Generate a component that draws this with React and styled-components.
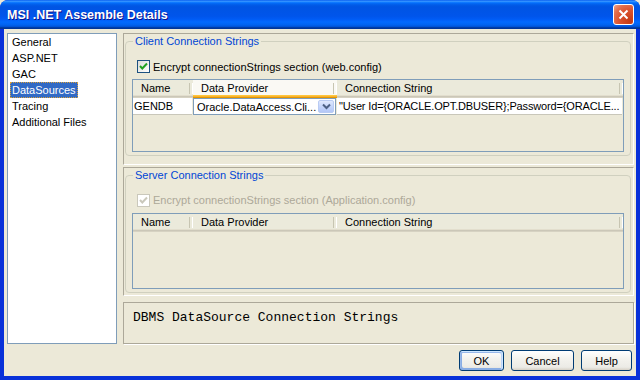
import React from 'react'
import styled, { createGlobalStyle } from 'styled-components'

const GlobalStyle = createGlobalStyle`
    html, body { margin:0; padding:0; background:#ECE9D8; }
    body { font-family:"Liberation Sans", Arial, sans-serif; font-size:11px; color:#000; }
    * { box-sizing:border-box; }
`

const pages = ['General', 'ASP.NET', 'GAC', 'DataSources', 'Tracing', 'Additional Files']

function Check({ disabled }) {
    return (
        <CheckBox $disabled={disabled}>
            <svg width="11" height="11" viewBox="0 0 11 11">
                <path d="M2 5 L4.3 7.5 L9 2.5" fill="none" stroke={disabled ? '#CAC8BB' : '#21A121'} strokeWidth="2" />
            </svg>
        </CheckBox>
    )
}

function Grid({ height, hot, rows }) {
    return (
        <GridBox style={{ height }}>
            <GridRow>
                <HeadCell>Name</HeadCell>
                <HeadCell $hot={hot}>Data Provider</HeadCell>
                <HeadCell>Connection String</HeadCell>
            </GridRow>
            {rows.map((r) => (
                <GridRow key={r.name}>
                    <Cell>{r.name}</Cell>
                    <Combo>
                        <span>{r.provider}</span>
                        <ComboButton>
                            <svg width="9" height="7" viewBox="0 0 9 7">
                                <path d="M1 1.5 L4.5 5 L8 1.5" fill="none" stroke="#4D6185" strokeWidth="2" />
                            </svg>
                        </ComboButton>
                    </Combo>
                    <Cell $last>{r.conn}</Cell>
                </GridRow>
            ))}
        </GridBox>
    )
}

function App() {
    return (
        <>
            <GlobalStyle />
            <Window>
                <TitleBar>
                    <Title>MSI .NET Assemble Details</Title>
                    <CloseBtn>
                        <svg width="11" height="11" viewBox="0 0 11 11">
                            <path d="M1.5 1.5 L9.5 9.5 M9.5 1.5 L1.5 9.5" stroke="#fff" strokeWidth="2" />
                        </svg>
                    </CloseBtn>
                </TitleBar>
                <Body>
                    <Main>
                        <PageList>
                            {pages.map((p) => (
                                <PageItem key={p} $selected={p === 'DataSources'}>{p}</PageItem>
                            ))}
                        </PageList>
                        <RightCol>
                            <Panel $h={132}>
                                <Group>
                                    <Legend>Client Connection Strings</Legend>
                                    <CheckRow>
                                        <Check />
                                        <span>Encrypt connectionStrings section (web.config)</span>
                                    </CheckRow>
                                    <Grid
                                        height={73}
                                        hot
                                        rows={[{
                                            name: 'GENDB',
                                            provider: 'Oracle.DataAccess.Cli...',
                                            conn: '"User Id={ORACLE.OPT.DBUSER};Password={ORACLE...',
                                        }]}
                                    />
                                </Group>
                            </Panel>
                            <Panel $h={130}>
                                <Group>
                                    <Legend>Server Connection Strings</Legend>
                                    <CheckRow $disabled>
                                        <Check disabled />
                                        <span>Encrypt connectionStrings section (Application.config)</span>
                                    </CheckRow>
                                    <Grid height={76} rows={[]} />
                                </Group>
                            </Panel>
                            <Description>DBMS DataSource Connection Strings</Description>
                        </RightCol>
                    </Main>
                    <Buttons>
                        <Button $default $w={45}>OK</Button>
                        <Button $w={63}>Cancel</Button>
                        <Button $w={51}>Help</Button>
                    </Buttons>
                </Body>
            </Window>
        </>
    )
}

const Window = styled.div`
    width:640px;
    height:380px;
    display:flex;
    flex-direction:column;
    background:#0831D9;
    border-radius:8px 8px 0 0;
    overflow:hidden;
`

const TitleBar = styled.div`
    height:29px;
    flex:none;
    display:flex;
    align-items:center;
    padding:0 6px 0 7px;
    background:linear-gradient(180deg, #0058EE 0%, #3A93FF 4%, #288EFF 6%, #127DFF 8%, #036FFC 10%, #0262EE 14%, #0057E5 20%, #0054E3 24%, #0055EB 56%, #005BF5 66%, #026AFE 76%, #0062EF 86%, #0052D6 92%, #0040AB 94%, #003092 100%);
`

const Title = styled.div`
    flex:1;
    color:#fff;
    font-family:"Liberation Sans", Arial, sans-serif;
    font-weight:bold;
    font-size:12.5px;
    text-shadow:1px 1px #0F1089;
    margin-top:1px;
`

const CloseBtn = styled.div`
    width:21px;
    height:21px;
    display:flex;
    align-items:center;
    justify-content:center;
    border:1px solid #fff;
    border-radius:3px;
    background:radial-gradient(circle at 85% 85%, #C43A14 0, #DC5430 50%, #E3704F 75%, #F0A58E 100%);
`

const Body = styled.div`
    flex:1;
    display:flex;
    flex-direction:column;
    background:#ECE9D8;
    margin:0 4px 4px;
    padding:4px 2px 0 3px;
`

const Main = styled.div`
    display:flex;
    gap:6px;
    height:311px;
`

const PageList = styled.div`
    width:110px;
    background:#fff;
    border:1px solid #7F9DB9;
    padding:0 1px;
`

const PageItem = styled.div`
    width:fit-content;
    height:16px;
    line-height:16px;
    margin-left:1px;
    padding:0 2px;
    color:${p => p.$selected ? '#fff' : '#000'};
    background:${p => p.$selected ? '#316AC5' : 'transparent'};
    outline:${p => p.$selected ? '1px dotted #D9A03A' : 'none'};
    outline-offset:-1px;
`

const RightCol = styled.div`
    flex:1;
    display:flex;
    flex-direction:column;
`

const Panel = styled.div`
    height:${p => p.$h}px;
    margin-bottom:2px;
    border:1px solid;
    border-color:#ACA899 #fff #fff #ACA899;
    padding:1px 2px 0 1px;
`

const Group = styled.fieldset`
    margin:0;
    min-width:0;
    border:1px solid #D0D0BF;
    border-radius:4px;
    padding:0 6px 3px;
`

const Legend = styled.legend`
    color:#0046D5;
    padding:0 2px;
    margin-left:1px;
    line-height:13px;
`

const CheckRow = styled.div`
    display:flex;
    align-items:center;
    gap:3px;
    height:13px;
    margin:12px 0 6px 5px;
    color:${p => p.$disabled ? '#ACA899' : '#000'};
`

const CheckBox = styled.span`
    width:13px;
    height:13px;
    display:flex;
    align-items:center;
    justify-content:center;
    border:1px solid ${p => p.$disabled ? '#CAC8BB' : '#1C5180'};
    background:${p => p.$disabled ? '#fff' : 'linear-gradient(135deg, #DCDCD7, #fff)'};
`

const GridBox = styled.div`
    border:1px solid #7F9DB9;
    background:#ECE9D8;
`

const GridRow = styled.div`
    display:grid;
    grid-template-columns:60px 144px 1fr;
`

const HeadCell = styled.div`
    position:relative;
    height:18px;
    line-height:16px;
    padding-left:8px;
    background:${p => p.$hot ? '#FAF9F4' : '#EBEADB'};
    box-shadow:${p => p.$hot
        ? 'inset 0 -1px 0 #E59700, inset 0 -2px 0 #F8B330, inset 0 -3px 0 #FFC73C'
        : 'inset 0 -1px 0 #D6D2C2, inset 0 -2px 0 #CBC7B8, inset 0 -3px 0 #E2DECD'};
    &::after{
        content:'';
        position:absolute;
        right:0;
        top:3px;
        bottom:4px;
        width:2px;
        border-left:1px solid #C7C5B2;
        border-right:1px solid #fff;
    }
`

const Cell = styled.div`
    height:17px;
    line-height:16px;
    padding-left:${p => p.$last ? '2px' : '1px'};
    background:#fff;
    border-bottom:1px solid #C9C7BA;
    margin-right:1px;
    letter-spacing:${p => p.$last ? '-0.15px' : '0'};
    white-space:nowrap;
    overflow:hidden;
`

const Combo = styled.div`
    height:17px;
    display:flex;
    align-items:center;
    justify-content:space-between;
    border:1px solid #7F9DB9;
    background:#fff;
    padding:0 1px 0 3px;
    margin-right:1px;
    white-space:nowrap;
`

const ComboButton = styled.span`
    width:16px;
    height:13px;
    display:flex;
    align-items:center;
    justify-content:center;
    border:1px solid #B9CBF3;
    border-radius:2px;
    background:linear-gradient(180deg, #E0E9FD 0%, #C6D6FB 50%, #B3C7F7 100%);
`

const Description = styled.div`
    height:42px;
    margin-top:4px;
    border:1px solid #ACA899;
    box-shadow:1px 1px 0 #fff;
    padding:7px 9px 0;
    font-family:"Liberation Mono", "Courier New", monospace;
    font-size:13px;
`

const Buttons = styled.div`
    display:flex;
    justify-content:flex-end;
    gap:7px;
    margin-top:6px;
    padding-right:2px;
`

const Button = styled.div`
    width:${p => p.$w}px;
    height:21px;
    display:flex;
    align-items:center;
    justify-content:center;
    border:1px solid #003C74;
    border-radius:3px;
    background:linear-gradient(180deg, #FFFFFF 0%, #F4F3EE 40%, #ECEBE6 85%, #D6D0C5 100%);
    box-shadow:${p => p.$default
        ? 'inset -1px 1px #CEE7FF, inset 1px 2px #98B8EA, inset -2px 2px #BCD4F6, inset 1px -1px #89ADE4, inset 2px -2px #89ADE4'
        : 'none'};
`

export default App
